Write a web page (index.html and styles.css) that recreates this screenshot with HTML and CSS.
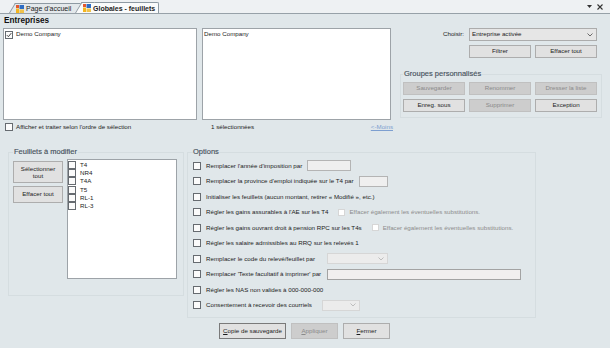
FILE: index.html
```html
<!DOCTYPE html>
<html lang="fr">
<head>
<meta charset="utf-8">
<title>Globales - feuillets</title>
<link rel="stylesheet" href="styles.css">
</head>
<body>
<div class="tabbar">
  <div class="tab tab-inactive">
    <svg class="tab-icon" viewBox="0 0 8 8" width="8" height="8"><rect x="0" y="0" width="3" height="3" fill="#e4572e"/><rect x="3.5" y="0" width="4.5" height="4" fill="#2e6cc4"/><rect x="0" y="3.5" width="3" height="4.5" fill="#f4b51f"/><rect x="3.5" y="4.5" width="4.5" height="3.5" fill="#f0c24a"/></svg>
    <span>Page d'accueil</span>
  </div>
  <div class="tab tab-active">
    <svg class="tab-icon" viewBox="0 0 8 8" width="8" height="8"><rect x="0" y="0" width="3" height="3" fill="#e4572e"/><rect x="3.5" y="0" width="4.5" height="4" fill="#2e6cc4"/><rect x="0" y="3.5" width="3" height="4.5" fill="#f4b51f"/><rect x="3.5" y="4.5" width="4.5" height="3.5" fill="#f0c24a"/></svg>
    <span>Globales - feuillets</span>
  </div>
  <div class="tab-ctrl">
    <svg width="5" height="3" viewBox="0 0 5 3"><path d="M0 0H5L2.5 3Z" fill="#333"/></svg>
    <svg width="6" height="6" viewBox="0 0 6 6"><path d="M0.5 0.5L5.5 5.5M5.5 0.5L0.5 5.5" stroke="#333" stroke-width="1.1"/></svg>
  </div>
</div>

<div class="page">
  <div class="section-title">Entreprises</div>

  <div class="top">
    <div class="listbox list-companies">
      <div class="list-item"><span class="cb"><svg viewBox="0 0 6 6" width="6" height="6"><path d="M0.8 3.1L2.4 4.7L5.3 1.1" fill="none" stroke="#333" stroke-width="0.9"/></svg></span><span>Demo Company</span></div>
    </div>
    <div class="listbox list-selected">
      <div class="list-item">Demo Company</div>
    </div>
    <div class="side">
      <div class="choose-row">
        <span class="choose-label">Choisir:</span>
        <div class="combo combo-choose"><span>Entreprise activée</span><svg width="6" height="4" viewBox="0 0 6 4"><path d="M0.5 0.5L3 3L5.5 0.5" fill="none" stroke="#6a6a6a"/></svg></div>
      </div>
      <div class="btn-row">
        <button class="btn">Filtrer</button>
        <button class="btn">Effacer tout</button>
      </div>
      <fieldset class="group group-custom">
        <legend>Groupes personnalisés</legend>
        <div class="btn-grid">
          <button class="btn" disabled>Sauvegarder</button>
          <button class="btn" disabled>Renommer</button>
          <button class="btn" disabled>Dresser la liste</button>
          <button class="btn">Enreg. sous</button>
          <button class="btn" disabled>Supprimer</button>
          <button class="btn">Exception</button>
        </div>
      </fieldset>
    </div>
  </div>

  <div class="sel-row">
    <div class="check-label"><span class="cb"></span><span>Afficher et traiter selon l'ordre de sélection</span></div>
    <span class="sel-count">1 sélectionnées</span>
    <span class="link-less">&lt;-Moins</span>
  </div>

  <div class="lower">
    <fieldset class="group group-sheets">
      <legend>Feuillets à modifier</legend>
      <div class="sheets-body">
        <div class="sheet-buttons">
          <button class="btn btn-select-all">Sélectionner<br>tout</button>
          <button class="btn btn-clear">Effacer tout</button>
        </div>
        <div class="listbox list-sheets">
          <div class="sheet-item"><span class="cb"></span><span>T4</span></div>
          <div class="sheet-item"><span class="cb"></span><span>NR4</span></div>
          <div class="sheet-item"><span class="cb"></span><span>T4A</span></div>
          <div class="sheet-item"><span class="cb"></span><span>T5</span></div>
          <div class="sheet-item"><span class="cb"></span><span>RL-1</span></div>
          <div class="sheet-item"><span class="cb"></span><span>RL-3</span></div>
        </div>
      </div>
    </fieldset>

    <fieldset class="group group-options">
      <legend>Options</legend>
      <div class="opt-row"><span class="cb"></span><span>Remplacer l'année d'imposition par</span><span class="field field-year"></span></div>
      <div class="opt-row"><span class="cb"></span><span>Remplacer la province d'emploi indiquée sur le T4 par</span><span class="field field-prov"></span></div>
      <div class="opt-row"><span class="cb"></span><span>Initialiser les feuillets (aucun montant, retirer « Modifié », etc.)</span></div>
      <div class="opt-row"><span class="cb"></span><span>Régler les gains assurables à l'AE sur les T4</span><span class="cb cb-sub"></span><span class="sub-label">Effacer également les éventuelles substitutions.</span></div>
      <div class="opt-row"><span class="cb"></span><span>Régler les gains ouvrant droit à pension RPC sur les T4s</span><span class="cb cb-sub"></span><span class="sub-label">Effacer également les éventuelles substitutions.</span></div>
      <div class="opt-row"><span class="cb"></span><span>Régler les salaire admissibles au RRQ sur les relevés 1</span></div>
      <div class="opt-row"><span class="cb"></span><span class="opt-label-wide">Remplacer le code du relevé/feuillet par</span><div class="combo combo-off combo-code"><span></span><svg width="6" height="4" viewBox="0 0 6 4"><path d="M0.5 0.5L3 3L5.5 0.5" fill="none" stroke="#bdbdbd"/></svg></div></div>
      <div class="opt-row"><span class="cb"></span><span class="opt-label-wide">Remplacer 'Texte facultatif à imprimer' par</span><span class="field field-text"></span></div>
      <div class="opt-row"><span class="cb"></span><span>Régler les NAS non valides à 000-000-000</span></div>
      <div class="opt-row"><span class="cb"></span><span class="opt-label-consent">Consentement à recevoir des courriels</span><div class="combo combo-off combo-consent"><span></span><svg width="6" height="4" viewBox="0 0 6 4"><path d="M0.5 0.5L3 3L5.5 0.5" fill="none" stroke="#bdbdbd"/></svg></div></div>
    </fieldset>
  </div>

  <div class="actions">
    <button class="btn btn-backup"><u>C</u>opie de sauvegarde</button>
    <button class="btn btn-apply" disabled><u>A</u>ppliquer</button>
    <button class="btn btn-close"><u>F</u>ermer</button>
  </div>
</div>
</body>
</html>
```

FILE: styles.css
```css
* { box-sizing: border-box; }
html, body { margin: 0; padding: 0; }
body {
  width: 610px;
  height: 348px;
  overflow: hidden;
  background: #e0e7ea;
  font-family: "Liberation Sans", Arial, sans-serif;
  font-size: 6.2px;
  line-height: 1;
  color: #1c1c1c;
}

/* ---------- tab strip ---------- */
.tabbar {
  display: flex;
  align-items: flex-end;
  height: 14px;
  padding-left: 15px;
  background: #eef1f3;
  border-bottom: 1px solid #97a1a8;
}
.tab {
  position: relative;
  display: flex;
  align-items: center;
  border-top: 1px solid #8e9aa3;
  border-right: 1px solid #8e9aa3;
  border-top-right-radius: 2px;
  background: var(--tab-bg);
  font-size: 7px;
  white-space: nowrap;
}
.tab::before {
  content: "";
  position: absolute;
  z-index: -1;
  top: -1px;
  bottom: 0;
  left: -6px;
  width: 12px;
  background: var(--tab-bg);
  border-top: 1px solid #8e9aa3;
  border-left: 1px solid #8e9aa3;
  transform: skewX(-31deg);
  transform-origin: bottom left;
}
.tab-inactive {
  --tab-bg: #e3e8eb;
  z-index: 1;
  width: 67px;
  height: 10px;
  padding-left: 1px;
  color: #222;
}
.tab-active {
  --tab-bg: #fafbfb;
  z-index: 2;
  height: 11px;
  padding: 0 3px 0 1px;
  font-weight: bold;
}
.tab-active::before { left: -7px; }
.tab-icon { flex: none; margin-right: 2px; }
.tab-ctrl {
  margin-left: auto;
  align-self: center;
  display: flex;
  align-items: center;
  gap: 5px;
  padding-right: 7px;
}

/* ---------- page ---------- */
.page { padding: 2px 0 0 3px; }
.section-title {
  font-weight: bold;
  font-size: 8.2px;
  line-height: 10px;
  padding-left: 1px;
  color: #111;
}
.top {
  display: flex;
  height: 92px;
  margin-top: 2px;
}
.listbox {
  background: #fff;
  border: 1px solid #9da3a8;
  height: 100%;
}
.list-companies { width: 194px; padding: 1px 0 0 1px; }
.list-selected { width: 189px; margin-left: 5px; padding: 1px 1px; }
.list-item {
  display: flex;
  align-items: center;
  gap: 3px;
  height: 9px;
}

.cb {
  flex: none;
  width: 8px;
  height: 8px;
  border: 1px solid #666b70;
  background: #fbfbfb;
  display: flex;
  align-items: center;
  justify-content: center;
}

.side {
  width: 202px;
  margin-left: 9px;
  display: flex;
  flex-direction: column;
}
.choose-row {
  display: flex;
  align-items: center;
  justify-content: flex-end;
  height: 13px;
  padding-right: 5px;
}
.choose-label { margin-right: 5px; }
.combo {
  display: flex;
  align-items: center;
  justify-content: space-between;
  height: 13px;
  padding: 0 3px 0 2px;
  border: 1px solid #acacac;
  background: #e6e6e6;
}
.combo-choose { width: 128px; }

.btn {
  font: inherit;
  color: #1c1c1c;
  background: #e1e1e1;
  border: 1px solid #adadad;
  border-radius: 0;
  margin: 0;
  padding: 0;
  height: 13px;
  line-height: 1;
}
.btn:disabled {
  background: #cdcdcd;
  border-color: #c0c0c0;
  color: #8a8a8a;
}
.btn-row {
  display: flex;
  justify-content: flex-end;
  gap: 4px;
  margin-top: 4px;
  padding-right: 5px;
}
.btn-row .btn { width: 62px; }

.group {
  margin: 0;
  min-width: 0;
  border: 1px solid #d5dde0;
}
.group legend {
  padding: 0 1px;
  font-size: 7.5px;
  line-height: 10px;
  color: #47525d;
  -webkit-text-stroke: 0.15px #47525d;
}
.group-custom {
  margin-top: 11px;
  padding: 3px 4px 5px 2px;
}
.btn-grid {
  display: grid;
  grid-template-columns: repeat(3, 62px);
  gap: 4px;
}

/* ---------- selection row ---------- */
.sel-row {
  display: flex;
  align-items: center;
  width: 390px;
  height: 10px;
  margin-top: 2px;
  padding-left: 2px;
}
.check-label {
  display: flex;
  align-items: center;
  gap: 3px;
  width: 206px;
}
.sel-count { flex: 1; }
.link-less {
  color: #7d9fd0;
  text-decoration: underline;
}

/* ---------- lower part ---------- */
.lower {
  display: flex;
  align-items: flex-start;
  margin-top: 15px;
}
.group-sheets {
  width: 176px;
  margin-left: 5px;
  padding: 2px 6px 16px 4px;
}
.sheets-body { display: flex; gap: 4px; }
.sheet-buttons {
  display: flex;
  flex-direction: column;
  gap: 3px;
  width: 50px;
  margin-top: 2px;
}
.btn-select-all { height: 22px; line-height: 7px; }
.btn-clear { height: 17px; }
.list-sheets {
  width: 110px;
  height: 120px;
  padding: 1px 0 0 0;
}
.sheet-item {
  display: flex;
  align-items: center;
  gap: 4px;
  height: 8.2px;
}

.group-options {
  width: 349px;
  margin-left: 3px;
  padding: 1px 5px 4px 5px;
}
.group-options legend { padding: 0; }
.opt-row {
  display: flex;
  align-items: center;
  height: 15.5px;
  white-space: nowrap;
}
.opt-row > .cb:first-child { margin-right: 5px; }
.field {
  height: 11px;
  margin-left: 5px;
  border: 1px solid #b4b4b4;
  background: #efefef;
}
.field-year { width: 44px; }
.field-prov { width: 29px; }
.field-text { width: 194px; margin-left: 0; border-color: #a3a3a3; background: #f1efef; }
.opt-label-wide { width: 121px; }
.opt-label-consent { width: 116px; }
.combo-off {
  height: 11px;
  background: #ececec;
  border-color: #d6d6d6;
}
.combo-code { width: 61px; }
.combo-consent { width: 38px; }
.cb-sub {
  width: 7px;
  height: 7px;
  margin-left: 10px;
  border-color: #d6d6d6;
  background: #fff;
}
.sub-label {
  margin-left: 4px;
  color: #8c8c8c;
}

/* ---------- bottom buttons ---------- */
.actions {
  display: flex;
  gap: 5px;
  margin-top: 5px;
  padding-left: 216px;
}
.actions .btn { height: 16px; }
.btn-backup { width: 67px; border-color: #7a7a7a; }
.btn-apply { width: 47px; }
.btn-close { width: 47px; }
```
